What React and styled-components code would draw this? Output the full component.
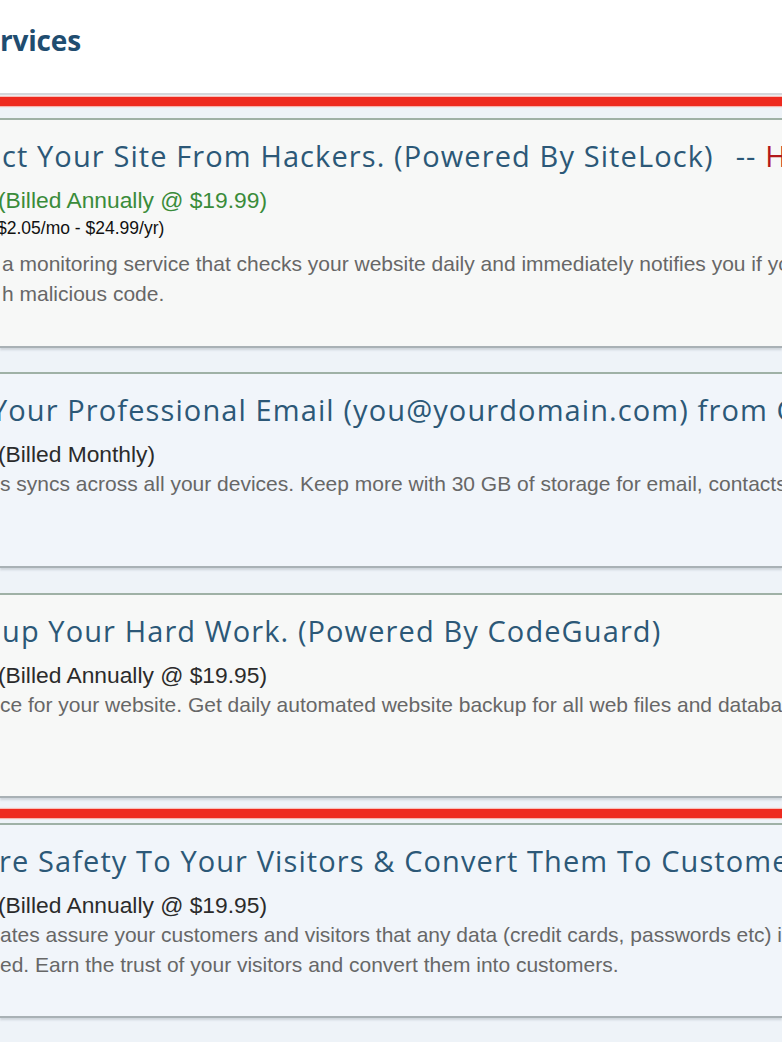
import React from "react";
import styled, { createGlobalStyle } from "styled-components";

const GlobalStyle = createGlobalStyle`
  html, body {
    margin: 0;
    padding: 0;
    background: #eef3f8;
  }
  * {
    box-sizing: border-box;
  }
`;

const services = [
  {
    title: "ct Your Site From Hackers. (Powered By SiteLock)",
    hot: "HOT!",
    titleIndent: 2,
    price: "(Billed Annually @ $19.99)",
    priceColor: "#3a8c3a",
    regular: "$2.05/mo - $24.99/yr)",
    description: [
      "a monitoring service that checks your website daily and immediately notifies you if your site is infected",
      "h malicious code.",
    ],
    descIndent: 2,
    tone: "plain",
    height: 230,
  },
  {
    title: "Your Professional Email (you@yourdomain.com) from Google",
    titleIndent: -9,
    price: "(Billed Monthly)",
    description: [
      "s syncs across all your devices. Keep more with 30 GB of storage for email, contacts and files.",
    ],
    descIndent: 0,
    tone: "blue",
    height: 196,
    gap: 24,
  },
  {
    title: "up Your Hard Work. (Powered By CodeGuard)",
    titleIndent: 2,
    price: "(Billed Annually @ $19.95)",
    description: [
      "ce for your website. Get daily automated website backup for all web files and databases.",
    ],
    descIndent: 0,
    tone: "plain",
    height: 205,
    gap: 25,
  },
  {
    title: "re Safety To Your Visitors & Convert Them To Customers",
    titleIndent: -1,
    price: "(Billed Annually @ $19.95)",
    description: [
      "ates assure your customers and visitors that any data (credit cards, passwords etc) is encrypted",
      "ed. Earn the trust of your visitors and convert them into customers.",
    ],
    descIndent: 0,
    tone: "blue",
    height: 195,
    redRule: true,
  },
];

export default function App() {
  return (
    <Page>
      <GlobalStyle />
      <Header>
        <Heading>rvices</Heading>
      </Header>
      <List>
        <GrayLine />
        <RedRule $top={2} />
        {services.map((s, i) => (
          <React.Fragment key={i}>
            {s.redRule && <RedRule $top={11} />}
            <Card
              $tone={s.tone}
              $height={s.height}
              $gap={s.redRule ? 5 : i === 0 ? 12 : s.gap}
            >
              <Title style={{ textIndent: s.titleIndent }}>
                {s.title}
                {s.hot && (
                  <Suffix>
                    -- <Hot>{s.hot}</Hot>
                  </Suffix>
                )}
              </Title>
              <Price $color={s.priceColor}>{s.price}</Price>
              {s.regular && <Regular>{s.regular}</Regular>}
              <Description $spaced={!!s.regular} style={{ textIndent: s.descIndent }}>
                {s.description.map((line, j) => (
                  <DescLine key={j}>{line}</DescLine>
                ))}
              </Description>
            </Card>
          </React.Fragment>
        ))}
      </List>
    </Page>
  );
}

const Page = styled.div`
  width: 782px;
  height: 1042px;
  overflow: hidden;
  background: #eef3f8;
`;

const Header = styled.header`
  height: 93px;
  background: #ffffff;
  display: flex;
  align-items: center;
  padding-bottom: 14px;
`;

const Heading = styled.h1`
  margin: 0;
  font: 700 28px/1 "Open Sans", "Lato", sans-serif;
  color: #1f4d70;
  letter-spacing: -0.2px;
`;

const List = styled.main`
  display: flex;
  flex-direction: column;
`;

const GrayLine = styled.div`
  height: 2px;
  background: #d4d7db;
`;

const RedRule = styled.div`
  height: 9px;
  margin-top: ${(p) => p.$top}px;
  background: #ee2a1f;
  box-shadow: 0 1px 1px #f5b3ad, 0 -1px 1px #f7c0ba;
`;

const Card = styled.section`
  height: ${(p) => p.$height}px;
  margin-top: ${(p) => p.$gap}px;
  padding-top: 18px;
  overflow: hidden;
  white-space: nowrap;
  background: ${(p) => (p.$tone === "blue" ? "#f1f5fa" : "#f7f8f7")};
  border-top: 2px solid #9fb1a6;
  border-bottom: 2px solid #a9b1b5;
  box-shadow: 0 2px 2px rgba(60, 70, 90, 0.18);
`;

const Title = styled.h2`
  margin: 0;
  font: 400 29px/36px "Open Sans", "Lato", sans-serif;
  letter-spacing: 1.1px;
  color: #2c5877;
`;

const Suffix = styled.span`
  margin-left: 22px;
`;

const Hot = styled.span`
  color: #b3191b;
`;

const Price = styled.div`
  margin-top: 12px;
  font: 400 22.8px/28px "Liberation Sans", Arial, sans-serif;
  color: ${(p) => p.$color || "#2b2b2b"};
  text-indent: -2px;
`;

const Regular = styled.div`
  margin-top: 2px;
  font: 400 17.5px/24px "Liberation Sans", Arial, sans-serif;
  color: #111111;
  text-indent: -3px;
`;

const Description = styled.div`
  margin-top: ${(p) => (p.$spaced ? 9 : 1)}px;
  font: 400 21px/30px "Liberation Sans", Arial, sans-serif;
  color: #676767;
`;

const DescLine = styled.div``;
